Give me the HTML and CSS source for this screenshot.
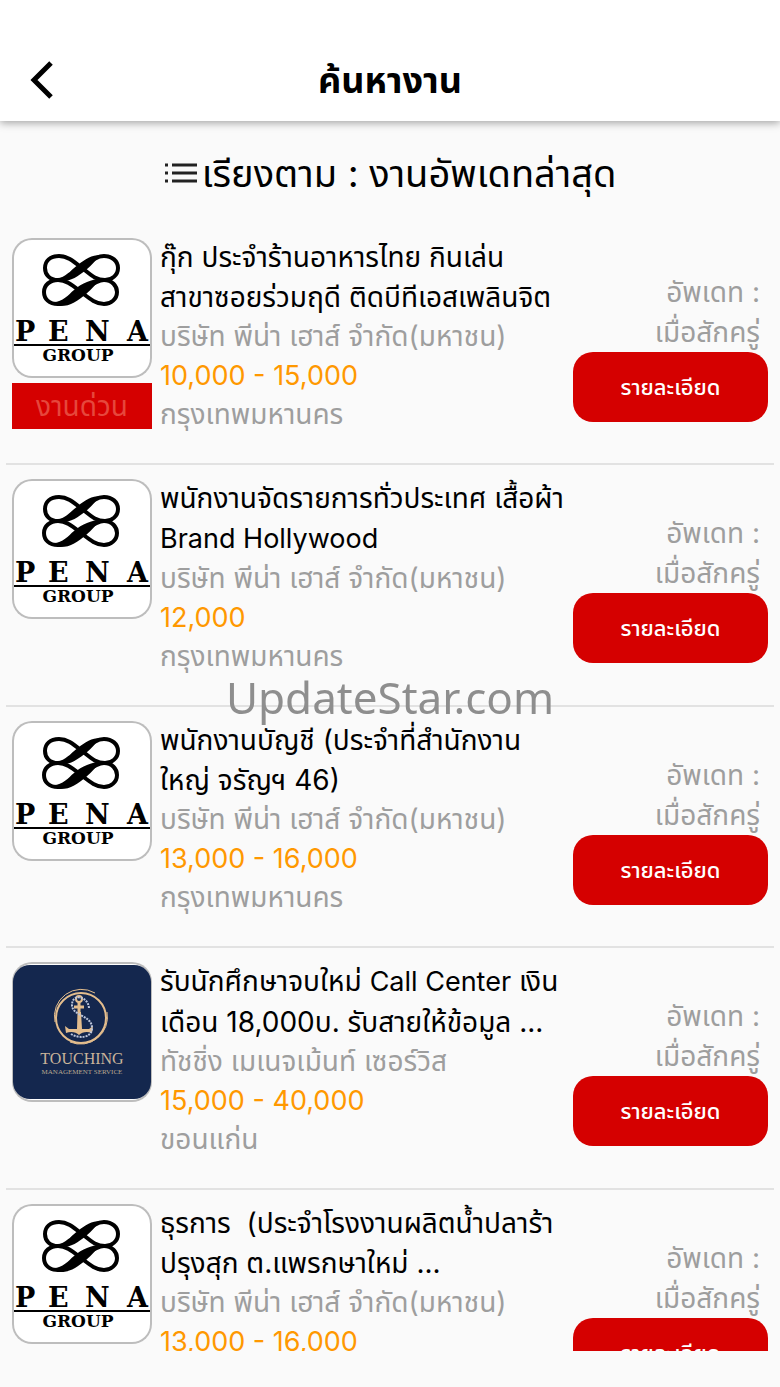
FILE: index.html
```html
<!DOCTYPE html>
<html lang="th">
<head>
<meta charset="UTF-8">
<meta name="viewport" content="width=device-width, initial-scale=1.0">
<title>ค้นหางาน</title>
<link rel="stylesheet" href="styles.css">
</head>
<body>
<!-- Shared logo mark -->
<svg class="defs" aria-hidden="true">
<symbol id="knot" viewBox="0 0 140 140">
<g fill="none" stroke="#000" stroke-width="4">
<path d="M70 30C60 22 55 18 47 18C38 18 33 23 33 30C33 37 38 42 46 42C56 42 61 36 70 30C78 24 84 18 92 18C100 18 106 23 106 30C106 37 100 42 93 42C84 42 79 37 70 30Z"/>
<path d="M69 54C60 47 54 42 46 42C38 42 32 47 32 54C32 61 37 66 46 66C55 66 60 60 69 54C78 48 84 42 92 42C100 42 105 48 105 54C105 61 99 66 92 66C84 66 78 61 69 54Z"/>
</g>
<path d="M48 40C56 37 60 31 66 27C73 21 80 17 88 17C84 22 80 27 74 32C66 38 60 43 48 44Z"/>
<path d="M40 64C50 65 56 57 62 52C70 45 80 41 88 41C84 46 80 51 74 56C65 63 58 69 46 68Z"/>
</symbol>
</svg>

<header>
<button class="back" aria-label="กลับ"><svg width="24" height="38" viewBox="0 0 24 38"><path d="M21 2L4 19L21 36" fill="none" stroke="#000" stroke-width="5"/></svg></button>
<h1>ค้นหางาน</h1>
</header>

<main>
<button class="sort"><svg width="34" height="22" viewBox="0 0 34 22"><path d="M1 3h3M1 11h3M1 19h3M8 3h25M8 11h25M8 19h25" stroke="#222" stroke-width="3"/></svg>เรียงตาม : งานอัพเดทล่าสุด</button>

<ul class="jobs">
<li class="job">
<div class="side">
<svg class="logo" viewBox="0 0 140 140" role="img" aria-label="PENA GROUP"><use href="#knot"/><text class="pena" y="103" x="3 36 73 115">PENA</text><path d="M2 107h136" stroke="#000" stroke-width="2"/><text class="group" x="66" y="123">GROUP</text></svg>
<span class="urgent">งานด่วน</span>
</div>
<div class="info">
<h2>กุ๊ก ประจำร้านอาหารไทย กินเล่น<br>สาขาซอยร่วมฤดี ติดบีทีเอสเพลินจิต</h2>
<p>บริษัท พีน่า เฮาส์ จำกัด(มหาชน)</p>
<p class="pay">10,000 - 15,000</p>
<p>กรุงเทพมหานคร</p>
</div>
<div class="action">
<p>อัพเดท :<br>เมื่อสักครู่</p>
<button class="detail">รายละเอียด</button>
</div>
</li>

<li class="job">
<div class="side">
<svg class="logo" viewBox="0 0 140 140" role="img" aria-label="PENA GROUP"><use href="#knot"/><text class="pena" y="103" x="3 36 73 115">PENA</text><path d="M2 107h136" stroke="#000" stroke-width="2"/><text class="group" x="66" y="123">GROUP</text></svg>
</div>
<div class="info">
<h2>พนักงานจัดรายการทั่วประเทศ เสื้อผ้า<br><span class="latin">Brand Hollywood</span></h2>
<p>บริษัท พีน่า เฮาส์ จำกัด(มหาชน)</p>
<p class="pay">12,000</p>
<p>กรุงเทพมหานคร</p>
</div>
<div class="action">
<p>อัพเดท :<br>เมื่อสักครู่</p>
<button class="detail">รายละเอียด</button>
</div>
</li>

<li class="job">
<div class="side">
<svg class="logo" viewBox="0 0 140 140" role="img" aria-label="PENA GROUP"><use href="#knot"/><text class="pena" y="103" x="3 36 73 115">PENA</text><path d="M2 107h136" stroke="#000" stroke-width="2"/><text class="group" x="66" y="123">GROUP</text></svg>
</div>
<div class="info">
<h2>พนักงานบัญชี (ประจำที่สำนักงาน<br>ใหญ่ จรัญฯ 46)</h2>
<p>บริษัท พีน่า เฮาส์ จำกัด(มหาชน)</p>
<p class="pay">13,000 - 16,000</p>
<p>กรุงเทพมหานคร</p>
</div>
<div class="action">
<p>อัพเดท :<br>เมื่อสักครู่</p>
<button class="detail">รายละเอียด</button>
</div>
</li>

<li class="job">
<div class="side">
<svg class="logo" viewBox="0 0 140 140" role="img" aria-label="TOUCHING MANAGEMENT SERVICE">
<rect x="1" y="3" width="138" height="134" rx="17" fill="#14274e"/>
<g fill="none" stroke="#e3bd8d">
<circle cx="69" cy="56" r="25" stroke-width="2"/>
<path d="M43 60A27 27 0 0 1 83 31M95 50A27 27 0 0 1 58 80" stroke-width="1"/>
<circle cx="67" cy="37" r="3" stroke-width="2"/>
<path d="M67 40V67M62 45h10" stroke-width="3"/>
</g>
<path d="M53 64L57 67H65L66 50H69L70 67H77L81 64L80 71C75 69 70 70 67 73C64 70 59 69 54 71Z" fill="#e3bd8d"/>
<path d="M77 46C76 34 60 31 60 43C60 54 80 53 80 66C80 76 67 77 59 72" fill="none" stroke="#bdc6dc" stroke-width="2" stroke-dasharray="2 1"/>
<text class="touching" x="70" y="102">TOUCHING</text>
<text class="mgmt" x="70" y="112">MANAGEMENT SERVICE</text>
</svg>
</div>
<div class="info">
<h2>รับนักศึกษาจบใหม่ <span class="latin">Call Center</span> เงิน<br>เดือน 18,000บ. รับสายให้ข้อมูล ...</h2>
<p>ทัชชิ่ง เมเนจเม้นท์ เซอร์วิส</p>
<p class="pay">15,000 - 40,000</p>
<p>ขอนแก่น</p>
</div>
<div class="action">
<p>อัพเดท :<br>เมื่อสักครู่</p>
<button class="detail">รายละเอียด</button>
</div>
</li>

<li class="job">
<div class="side">
<svg class="logo" viewBox="0 0 140 140" role="img" aria-label="PENA GROUP"><use href="#knot"/><text class="pena" y="103" x="3 36 73 115">PENA</text><path d="M2 107h136" stroke="#000" stroke-width="2"/><text class="group" x="66" y="123">GROUP</text></svg>
</div>
<div class="info">
<h2>ธุรการ&nbsp; (ประจำโรงงานผลิตน้ำปลาร้า<br>ปรุงสุก ต.แพรกษาใหม่ ...</h2>
<p>บริษัท พีน่า เฮาส์ จำกัด(มหาชน)</p>
<p class="pay">13,000 - 16,000</p>
<p>กรุงเทพมหานคร</p>
</div>
<div class="action">
<p>อัพเดท :<br>เมื่อสักครู่</p>
<button class="detail">รายละเอียด</button>
</div>
</li>
</ul>
</main>
<div class="watermark">UpdateStar.com</div>
</body>
</html>
```
FILE: styles.css
```css
*{margin:0;padding:0;box-sizing:border-box;}
body{height:100vh;display:flex;flex-direction:column;padding-bottom:36px;font-family:Inter,"Noto Sans Thai",sans-serif;font-size:28px;line-height:40px;color:#000;background:#fafafa;}
button{font:inherit;border:none;background:none;cursor:pointer;}
.defs{position:absolute;width:0;height:0;}

/* Top bar */
header{flex:none;display:grid;grid-template-columns:84px 1fr 84px;align-items:center;padding:40px 0 1px;background:#fff;box-shadow:0 2px 8px rgba(0,0,0,0.35);z-index:1;}
header h1{font-size:36px;line-height:80px;text-align:center;}
.back{display:flex;justify-content:center;}

/* Sort + list */
main{flex:1;min-height:0;overflow-y:auto;scrollbar-width:none;}
.sort{display:flex;align-items:center;justify-content:center;gap:4px;width:100%;padding:28px 0 27px;font-size:38px;line-height:48px;}
.jobs{list-style:none;padding:0 6px;}
.job{display:flex;gap:8px;padding:13px 6px 29px;border-bottom:2px solid #e2e2e2;}
.side{flex:none;width:140px;padding-top:1px;}
.logo{display:block;width:140px;height:140px;border-radius:20px;background:#fff;box-shadow:inset 0 0 0 2px #bdbdbd;}
.urgent{display:block;margin:5px 0 -3px;line-height:46px;text-align:center;color:#e6473c;background:#d50000;}
.info{flex:1;min-width:0;white-space:nowrap;color:#9e9e9e;}
.info h2{font-size:28px;font-weight:400;color:#000;}
.info p{line-height:39px;}
.info .pay,.latin{font-size:27px;}
.info .pay{color:#ff9800;}
.action{flex:none;width:195px;padding-top:35px;text-align:right;color:#9e9e9e;}
.action p{padding-right:8px;}
.detail{display:block;width:100%;height:70px;border-radius:20px;font-size:22px;font-weight:500;color:#fff;background:#d50000;}

/* Logo lettering */
.pena{font:bold 27px "DejaVu Serif",serif;}
.group{font:bold 17px "DejaVu Serif",serif;text-anchor:middle;}
.touching{font:16px "Liberation Serif",serif;text-anchor:middle;fill:#c9b49a;}
.mgmt{font:7px "Liberation Serif",serif;text-anchor:middle;fill:#b9a78f;}

.watermark{position:fixed;top:50%;left:0;right:0;font-family:"Noto Sans",sans-serif;font-size:44px;line-height:6px;text-align:center;color:#8e8e8e;pointer-events:none;z-index:2;}
```
